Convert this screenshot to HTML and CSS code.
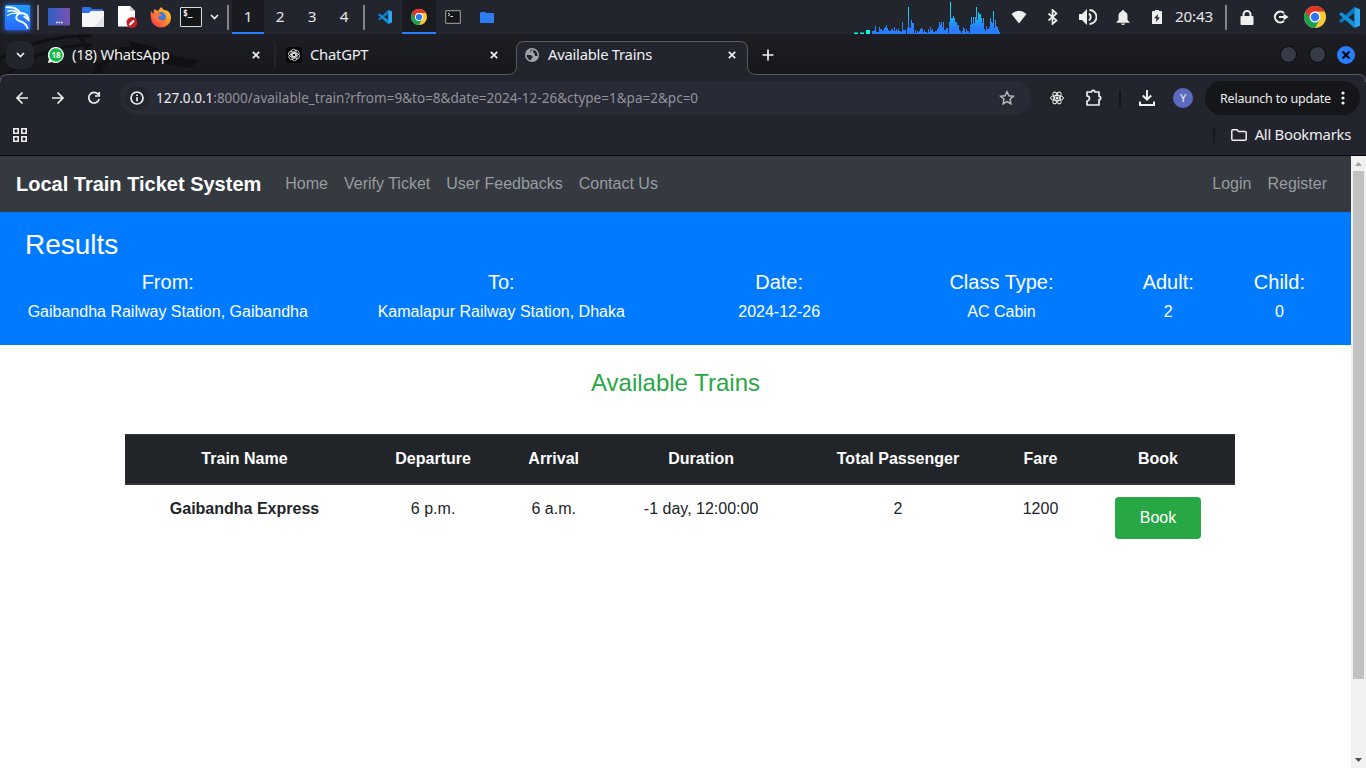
FILE: index.html
```html
<!DOCTYPE html>
<html lang="en">
<head>
<meta charset="utf-8">
<title>Available Trains</title>
<link rel="stylesheet" href="styles.css">
</head>
<body>
<svg class="defs" width="0" height="0">
  <defs>
    <linearGradient id="load" gradientUnits="userSpaceOnUse" x1="0" y1="0" x2="0" y2="34"><stop offset="0" stop-color="#00fff0"/><stop offset=".45" stop-color="#16c0ef"/><stop offset=".8" stop-color="#277fff"/><stop offset="1" stop-color="#277fff"/></linearGradient>
    <linearGradient id="desk" x1="0" y1="0" x2="1" y2="0"><stop offset="0" stop-color="#2f60c8"/><stop offset="1" stop-color="#7a51b0"/></linearGradient>
    <linearGradient id="kali" x1="0" y1="0" x2="0" y2="1"><stop offset="0" stop-color="#249bff"/><stop offset="1" stop-color="#2868ff"/></linearGradient>
    <linearGradient id="fox" x1="1" y1="0" x2="0" y2="1"><stop offset="0" stop-color="#ffe23c"/><stop offset=".45" stop-color="#ff9029"/><stop offset="1" stop-color="#f3225b"/></linearGradient>
    <symbol id="chrome" viewBox="0 0 48 48">
      <circle cx="24" cy="24" r="24" fill="#fcc934"/>
      <path d="M24 24 3.2 12A24 24 0 0 0 24 48l10.4-18z" fill="#1e9e4f"/>
      <path d="M24 12h20.8A24 24 0 0 0 3.2 12l10.4 18A12 12 0 0 1 24 12z" fill="#e1352c"/>
      <circle cx="24" cy="24" r="12" fill="#fff"/><circle cx="24" cy="24" r="9.3" fill="#2a78f0"/>
    </symbol>
    <symbol id="vscode" viewBox="0 0 24 24">
      <path d="M17.5 0 24 2.7v18.6L17.5 24z" fill="#29a9f2"/>
      <path d="M17.5 0 0 15.8l2.6 2.4L17.5 6.8z" fill="#0a78c2"/>
      <path d="M17.5 24 0 8.2l2.6-2.4 14.9 11.4z" fill="#1190dc"/>
    </symbol>
  </defs>
</svg>

<div class="panel">
  <span class="slot w34"><svg class="kali" width="25" height="25" viewBox="0 0 26 26"><rect width="26" height="26" rx="1" fill="url(#kali)"/><g fill="none" stroke="#fff" stroke-linecap="round"><path d="M1.500 2.500C8 1.500 13 4 16 8.500" stroke-width="2"/><path d="M3 6.500C7 5 11 6 14 8.500" stroke-width="1.400"/><path d="M2.500 11C6 8 10 8 14 9" stroke-width="1.200"/><path d="M14 9C20 7.500 24 10 24.500 15.500L20 12" stroke-width="2"/><path d="M13.500 9.500C9 15 14 16.500 17.500 17.500S22 20 23.500 24" stroke-width="2"/></g></svg></span>
  <span class="sep"></span>
  <span class="slot w34"><svg width="22" height="18"><rect width="22" height="17.500" rx="1" fill="url(#desk)"/><path d="M8 14.500h1.500m1 0H12m1 0h1.500" stroke="#fff" stroke-width="1.400"/></svg></span>
  <span class="slot w34"><svg width="22" height="20"><path d="M1 0h7l2 2h10q1 0 1 1v5H0V1z" fill="#2f72e4"/><path d="M0 6h7l2-2h13v15q0 1-1 1H1q-1 0-1-1z" fill="#f6f6f8"/><path d="m12 20 10-11v11z" fill="#e1e1e6"/></svg></span>
  <span class="slot w34"><svg width="20" height="22"><path d="M1 0h12l5 5v15.500H1z" fill="#fff"/><path d="M13 0v5h5z" fill="#ccc"/><circle cx="15" cy="16.500" r="5.500" fill="#c91d25"/><path d="m12.500 19 4.500-4.500" stroke="#fff" stroke-width="2.200"/></svg></span>
  <span class="slot w34"><svg width="22" height="22" viewBox="0 0 22 22"><path d="M1 5 3.500 8 4 3l4 2 3-4 3 3c5 0 7 4 7 8a10 9.500 0 0 1-20 0C.5 9 .5 7 1 5z" fill="url(#fox)"/><circle cx="11" cy="11" r="5" fill="#4379d9"/><path d="M4 8c3-2 6-1 8 1l-4 2c1 4 5 4 8 2-2 5-10 5-12-1z" fill="#ff7139"/></svg></span>
  <span class="slot w26"><span class="termicon">$_</span></span>
  <span class="slot w20"><svg width="9" height="6"><path d="m1 1 3.500 3.500L8 1" class="stroke2"/></svg></span>
  <span class="sep"></span>
  <span class="slot w32 active">1</span><span class="slot w32">2</span><span class="slot w32">3</span><span class="slot w32">4</span>
  <span class="sep"></span>
  <span class="slot w34"><svg width="14" height="14"><use href="#vscode"/></svg></span>
  <span class="slot w34 active"><svg width="16" height="16"><use href="#chrome"/></svg></span>
  <span class="slot w34"><svg width="16" height="14"><rect x=".6" y=".6" width="14.800" height="12.800" rx="1" fill="#16171b" stroke="#8c8c8c" stroke-width="1.200"/><path d="m3 3 2 1.500L3 6M5.500 6.500H8" stroke="#ddd" fill="none"/></svg></span>
  <span class="slot w34"><svg width="14" height="11"><path d="M0 1q0-1 1-1h4l1 1h7q1 0 1 1v8q0 1-1 1H1q-1 0-1-1z" fill="#2f7df4"/></svg></span>
  <span class="grow"></span>
  <svg class="graph" width="148" height="34" shape-rendering="crispEdges"><path d="M0 33.500h4m2 0h4" stroke="#12f5dc"/><path d="M0 32.500h4m2 0h4" stroke="#178986"/><path d="M12 30h4v4h-4z" fill="#00ffe0"/><path id="bars" fill="url(#load)"/></svg>
  <span class="slot w34"><svg width="16" height="14"><path d="M.5 4Q8-2.500 15.500 4L8 13.500z" class="light"/></svg></span>
  <span class="slot w34"><svg width="12" height="16"><path d="m1.500 4.500 8 7L5.500 15V1l4 3.500-8 7" class="stroke2"/></svg></span>
  <span class="slot w36"><svg width="18" height="16"><path d="M0 5h3l5-5v16l-5-5H0z" class="light"/><path d="M10 4.500q3.500 3.500 0 7M10.500 1a7 7 0 0 1 0 14" fill="none" stroke="#eee" stroke-width="1.800"/></svg></span>
  <span class="slot w34"><svg width="14" height="15"><path d="M7 0q1.200 0 1.200 1.300Q11.500 2.500 11.500 6v4L14 12.800H0L2.500 10V6q0-3.500 3.300-4.700Q5.800 0 7 0zM5 13.500h4Q8.500 15 7 15t-2-1.500z" class="light"/></svg></span>
  <span class="slot w34"><svg width="10" height="14"><path d="M3 0h4v1h2q1 0 1 1v12H0V2q0-1 1-1h2z" class="light"/><path d="M6 4 2 8.200h2.500L4 12l4-4.500H5.600z" fill="#23252e"/></svg></span>
  <span class="slot w40 clock">20:43</span>
  <span class="gap8"></span>
  <span class="sep"></span>
  <span class="slot w34"><svg width="14" height="15"><rect y="6" x=".5" width="13" height="9" rx="1" class="light"/><path d="M3.500 7V4.500a3.500 3.500 0 0 1 7 0V7" fill="none" stroke="#eee" stroke-width="2"/></svg></span>
  <span class="slot w34"><svg width="16" height="14"><path d="M11 3A5.400 5.400 0 1 0 11 11M6 7h6" fill="none" stroke="#eee" stroke-width="2.100"/><path d="m10.500 3.500 5 3.500-5 3.500z" class="light"/></svg></span>
  <span class="slot w34"><svg width="22" height="22"><use href="#chrome"/></svg></span>
  <span class="slot w34"><svg width="21" height="21"><use href="#vscode"/></svg></span>
</div>

<div class="browser">
  <div class="tabstrip">
    <svg class="wall" width="1366" height="50"><g fill="none" stroke="#101115"><path d="M-5 28Q35 1 92 2M4 43Q42 10 92 11" stroke-width="3"/><path d="m79 1 23 38" stroke-width="4"/><path d="M94 41q18-28 50-27" stroke-width="6"/></g><path d="m127 6 26 7 25 10 21 3-8 8-15-4 12 4-24-5-31-2-14-4 13-4-16-6 16 1z" fill="#0f1014"/>
      <path d="M0 48.500V48q0-7.500 8-7.500h500q8.500 0 8.500-9V15q0-7.500 8-7.500h215q8 0 8 7.500v16.500q0 9 9 9H1358q7.500 0 7.500 7.500" fill="#23252e" stroke="#5a5c64"/></svg>
    <button class="tabsearch"><svg width="9" height="6"><path d="m1 1 3.500 3.500L8 1" class="stroke2"/></svg></button>
    <div class="tab t1"><svg width="16" height="16"><path d="M8 0a8 8 0 1 1-4 15L0 16l1-4A8 8 0 0 1 8 0z" fill="#fff"/><circle cx="8" cy="8" r="6.700" fill="#12bd43"/><text x="8" y="11" text-anchor="middle" class="badge">18</text></svg><span class="tname">(18) WhatsApp</span><svg class="x" width="8" height="8"><path d="m.8.8 6.400 6.400m0-6.400L.8 7.200" class="stroke2"/></svg></div>
    <div class="tab t2"><svg width="16" height="16"><rect width="16" height="16" rx="3" fill="#08090b"/><g fill="none" stroke="#ddd" stroke-width=".8"><rect id="p" x="5" y="2.300" width="5" height="7.500" rx="2.400"/><use href="#p" transform="rotate(60 8 8)"/><use href="#p" transform="rotate(120 8 8)"/><use href="#p" transform="rotate(180 8 8)"/><use href="#p" transform="rotate(240 8 8)"/><use href="#p" transform="rotate(300 8 8)"/></g></svg><span class="tname">ChatGPT</span><svg class="x" width="8" height="8"><path d="m.8.8 6.400 6.400m0-6.400L.8 7.200" class="stroke2"/></svg></div>
    <div class="tab t3"><svg width="14" height="14"><circle cx="7" cy="7" r="7" fill="#a2a5ae"/><path d="M8 1.600H6.500L5 3v1.500L3 5.500 1.600 7H6l1.500 1.500v1.300L6 11v1.300C3.500 11.800 1.600 9.800 1.500 7M8.500 1.800 8 4.500l1.500 1L10 8h2.500c.3-3-1.500-5.500-4-6.200z" fill="#23252e"/></svg><span class="tname">Available Trains</span><svg class="x" width="8" height="8"><path d="m.8.8 6.400 6.400m0-6.400L.8 7.200" class="stroke2"/></svg></div>
    <svg class="plus" width="12" height="12"><path d="M6 .5v11M.5 6h11" class="stroke2"/></svg>
    <span class="grow"></span>
    <span class="winbtn"></span><span class="winbtn"></span>
    <span class="winbtn close"><svg width="10" height="10"><path d="m1.500 1.500 7 7m0-7-7 7" stroke="#0a0c12" stroke-width="2.400"/></svg></span>
  </div>

  <div class="toolbar">
    <svg class="back" width="14" height="14"><path d="M13 7H2m5.500-5.500L2 7l5.500 5.500" class="stroke2"/></svg>
    <svg class="fwd" width="14" height="14"><path d="M1 7h11M6.500 1.500 12 7l-5.500 5.500" class="stroke2"/></svg>
    <svg class="reload" width="14" height="14"><path d="M11.300 3.500A5.300 5.300 0 1 0 12.200 8M12.200 1v4H8" class="stroke2"/></svg>
    <div class="urlbar">
      <span class="info"><svg width="14" height="14"><circle cx="7" cy="7" r="6" class="stroke2"/><path d="M7 6.200v4M7 3.500v1.600" class="stroke2"/></svg></span>
      <span class="url"><b>127.0.0.1</b>:8000/available_train?rfrom=9&amp;to=8&amp;date=2024-12-26&amp;ctype=1&amp;pa=2&amp;pc=0</span>
      <svg width="16" height="16"><path d="m8 1.800 1.900 4 4.400.5-3.300 3 .9 4.400L8 11.500l-3.900 2.200.9-4.400-3.300-3 4.400-.5z" fill="none" stroke="#b8b9bd" stroke-width="1.500"/></svg>
    </div>
    <svg class="react" width="16" height="16"><rect width="16" height="16" fill="#202229"/><g fill="none" stroke="#eee" stroke-width="1"><ellipse cx="8" cy="8" rx="6.500" ry="2.600"/><ellipse cx="8" cy="8" rx="6.500" ry="2.600" transform="rotate(60 8 8)"/><ellipse cx="8" cy="8" rx="6.500" ry="2.600" transform="rotate(120 8 8)"/></g><circle cx="8" cy="8" r="1.500" fill="#eee"/></svg>
    <svg class="puzzle" width="18" height="18"><path d="M2 3h4.500a1.700 1.700 0 0 1 3.400 0H14v4.300a1.700 1.700 0 0 1 0 3.400V16H2v-4a2.500 2.500 0 0 0 0-5z" fill="none" stroke="#eee" stroke-width="1.700" stroke-linejoin="round"/></svg>
    <span class="vline"></span>
    <svg class="down" width="16" height="16"><path d="M8 0v9M3.800 5.500 8 9.700l4.200-4.200M1 11.500V15h14v-3.500" fill="none" stroke="#eee" stroke-width="2"/></svg>
    <span class="avatar">Y</span>
    <span class="relaunch"><span class="rtext">Relaunch to update</span><svg width="4" height="14"><circle cx="2" cy="2" r="1.600" class="light"/><circle cx="2" cy="7" r="1.600" class="light"/><circle cx="2" cy="12" r="1.600" class="light"/></svg></span>
  </div>
  <div class="bookmarks">
    <svg width="14" height="14"><path d="M.8.8h4.400v4.400H.8zM8.800.8h4.400v4.400H8.800zM.8 8.800h4.400v4.400H.8zM8.800 8.800h4.400v4.400H8.800z" fill="none" stroke="#eee" stroke-width="1.600"/></svg>
    <span class="grow"></span><span class="vline"></span>
    <svg class="folder" width="16" height="12"><path d="M.8 10V2q0-1.200 1.200-1.200h4L7.500 2.500H14q1.200 0 1.200 1v6.700q0 1-1 1H2q-1.200 0-1.200-1.200z" fill="none" stroke="#eee" stroke-width="1.500"/></svg>
    <span class="allbm">All Bookmarks</span>
  </div>
</div>

<div class="viewport">
  <main class="page">
    <nav class="navbar"><a class="brand">Local Train Ticket System</a><a>Home</a><a>Verify Ticket</a><a>User Feedbacks</a><a>Contact Us</a><span class="grow"></span><a>Login</a><a>Register</a></nav>
    <section class="results">
      <h3>Results</h3>
      <div class="row">
        <div><h5>From:</h5><p>Gaibandha Railway Station, Gaibandha</p></div>
        <div><h5>To:</h5><p>Kamalapur Railway Station, Dhaka</p></div>
        <div><h5>Date:</h5><p>2024-12-26</p></div>
        <div><h5>Class Type:</h5><p>AC Cabin</p></div>
        <div><h5>Adult:</h5><p>2</p></div>
        <div><h5>Child:</h5><p>0</p></div>
      </div>
    </section>
    <h4 class="title">Available Trains</h4>
    <table class="trains">
      <colgroup><col class="c1"><col class="c2"><col class="c3"><col class="c4"><col class="c5"><col class="c6"><col class="c7"></colgroup>
      <thead><tr><th>Train Name</th><th>Departure</th><th>Arrival</th><th>Duration</th><th>Total Passenger</th><th>Fare</th><th>Book</th></tr></thead>
      <tbody><tr><th>Gaibandha Express</th><td>6 p.m.</td><td>6 a.m.</td><td>-1 day, 12:00:00</td><td>2</td><td>1200</td><td><a class="btn">Book</a></td></tr></tbody>
    </table>
  </main>
  <div class="scrollbar">
    <svg width="15" height="15"><path d="M4 10h7L7.500 6z" fill="#a3a3a3"/></svg>
    <span class="thumb"></span><span class="grow"></span>
    <svg width="15" height="15"><path d="M4 5h7L7.500 9z" fill="#505050"/></svg>
  </div>
</div>
<script src="graph.js"></script>
</body>
</html>
```
FILE: styles.css
```css
* { box-sizing: border-box; }
body { margin: 0; width: 1366px; height: 768px; overflow: hidden; display: flex; flex-direction: column; background: #fff; font-family: "Noto Sans", sans-serif; color: #eee; }
svg { display: block; flex: none; }
.defs { position: absolute; }
.light { fill: #eee; }
.stroke2 { fill: none; stroke: #eee; stroke-width: 1.7; }
.grow { flex: 1; }

.panel { height: 34px; flex: none; display: flex; background: #23252e; font-size: 15.3px; line-height: 20px; color: #e4e4e6; }
.slot { height: 34px; flex: none; display: flex; align-items: center; justify-content: center; }
.w20 { width: 20px; } .w26 { width: 26px; } .w32 { width: 32px; padding-bottom: 2px; } .w34 { width: 34px; } .w36 { width: 36px; } .w40 { width: 40px; }
.gap8 { width: 8px; }
.active { background: #191b20; box-shadow: inset 0 -2px #277fff; }
.sep { width: 2px; height: 25px; margin: 5px 3px 0; background: #858589; }
.kali { box-shadow: 0 0 5px #2777ff; }
.termicon { width: 22px; height: 20px; border: 1px solid #ddd; border-radius: 1px; background: #141518; color: #fff; font: bold 8px/12px "DejaVu Sans Mono", monospace; padding-left: 2px; }
.clock { padding-bottom: 2px; letter-spacing: -.2px; }

.browser { height: 122px; flex: none; background: #23252e; border-bottom: 1px solid #08090c; }
.tabstrip { position: relative; height: 41px; display: flex; align-items: center; background: linear-gradient(#1d1e23, #17181c); font-size: 14.8px; letter-spacing: -.25px; }
.tabstrip > * { position: relative; }
.tabstrip > .wall { position: absolute; left: 0; top: 0; height: 50px; }
.tabsearch { width: 28px; height: 28px; margin-left: 6px; border: 0; border-radius: 9px; background: #23252e; display: flex; align-items: center; justify-content: center; padding: 0; }
.tab { height: 24px; display: flex; align-items: center; flex: none; }
.t1 { width: 212px; margin-left: 14px; }
.t2 { width: 224px; margin-left: 14px; padding-left: 10px; border-left: 2px solid #23252e; }
.t3 { width: 211px; margin-left: 27px; }
.tname { flex: 1; margin-left: 8px; padding-bottom: 2px; white-space: nowrap; }
.t3 .tname { margin-left: 9px; }
.badge { font: bold 8px "Noto Sans", sans-serif; fill: #fff; letter-spacing: 0; }
.plus { margin-left: 26px; }
.winbtn { width: 17px; height: 17px; margin-right: 12px; border-radius: 50%; border: 1px solid #08090c; background: #363b47; display: flex; align-items: center; justify-content: center; flex: none; }
.winbtn.close { width: 18px; height: 18px; margin-right: 11px; margin-left: -1px; border: 0; background: #277fff; }

.toolbar { position: relative; height: 46px; display: flex; align-items: center; }
.back { margin-left: 15px; } .fwd { margin-left: 22px; } .reload { margin-left: 22px; }
.urlbar { width: 911px; height: 34px; margin-left: 19px; border-radius: 17px; background: #282a35; display: flex; align-items: center; padding: 0 16px 0 5px; }
.info { width: 24px; height: 24px; border-radius: 50%; background: #23252e; display: flex; align-items: center; justify-content: center; }
.url { flex: 1; margin-left: 7px; font-size: 13.52px; color: #92939a; white-space: nowrap; }
.url b { color: #eee; font-weight: 400; }
.react { margin-left: 18px; } .puzzle { margin-left: 20px; }
.vline { width: 2px; height: 16px; background: #15161b; }
.toolbar .vline { margin-left: 16px; }
.down { margin-left: 18px; }
.avatar { width: 20px; height: 20px; margin-left: 18px; border-radius: 50%; background: #5c6bc0; font-size: 11px; line-height: 20px; text-align: center; }
.relaunch { width: 155px; height: 34px; margin-left: 12px; border-radius: 17px; background: #15161a; display: flex; align-items: center; padding: 0 15px; font-size: 12.5px; letter-spacing: -.2px; white-space: nowrap; }
.rtext { flex: 1; }
.bookmarks { height: 34px; display: flex; align-items: center; padding: 0 15px 6px 13px; font-size: 14.8px; letter-spacing: -.25px; }
.allbm { padding-bottom: 2px; }
.folder { margin: 0 8px 0 16px; }

.viewport { flex: 1; display: flex; font-family: "Liberation Sans", Arial, sans-serif; }
.page { width: 1351px; background: #fff; color: #212529; font-size: 16px; line-height: 24px; }
.navbar { height: 56px; display: flex; align-items: center; background: #343a40; padding: 0 16px; color: #999c9f; }
.navbar a { padding: 0 8px; }
.navbar .brand { padding: 0; margin-right: 16px; color: #fff; font-size: 20px; font-weight: 700; }
.results { height: 133px; background: #007bff; color: #fff; padding-top: 16px; }
h3, h4, h5, p { margin: 0; font-weight: 400; }
h3 { font-size: 28px; line-height: 34px; padding-left: 25px; margin-bottom: 8px; }
.row { display: grid; grid-template-columns: 3fr 3fr 2fr 2fr 1fr 1fr; width: 1334px; margin-left: 1px; text-align: center; }
h5 { font-size: 20px; line-height: 24px; margin-bottom: 6px; }
.title { margin-top: 23px; font-size: 24px; line-height: 29px; color: #28a745; text-align: center; }
.trains { width: 1110px; margin: 37px 0 0 125px; table-layout: fixed; border-collapse: separate; border-spacing: 0; text-align: center; }
.trains th, .trains td { padding: 12px 0; vertical-align: top; }
.trains thead th { height: 51px; background: #212529; color: #fff; border-top: 1px solid #32383e; border-bottom: 2px solid #32383e; }
.trains tr > :last-child { padding-right: 1px; }
.c1 { width: 239px; } .c2 { width: 138.2px; } .c3 { width: 103px; } .c4 { width: 191.8px; } .c5 { width: 202px; } .c6 { width: 83px; } .c7 { width: 153px; }
.btn { display: block; width: 86px; height: 42px; margin-left: 33px; border-radius: 4px; background: #28a745; color: #fff; line-height: 42px; }
.scrollbar { width: 15px; background: #f1f1f1; display: flex; flex-direction: column; }
.thumb { height: 508px; margin: 0 2px; background: #c1c1c1; }
```
FILE: graph.js
```js
// CPU load history, one pixel-wide bar per sample
const load = [3,3,4,8,2,2,2,7,5,5,3,4,6,7,9,6,4,3,3,5,5,3,7,3,5,3,5,3,3,2,12,4,4,4,0,6,27,7,6,14,11,11,1,4,1,3,2,3,5,6,5,2,4,2,2,1,5,2,7,4,5,2,2,3,3,5,7,12,9,12,7,12,4,4,6,6,1,12,32,16,16,18,16,12,12,9,9,4,3,1,3,7,5,2,5,3,3,1,9,17,10,17,11,17,27,14,22,20,20,16,11,16,5,3,8,5,5,7,16,12,11,23,6,14,8,7,4,2];
document.getElementById("bars").setAttribute("d", load.map((v, i) => `M${18 + i} 34v${-v}h1v${v}z`).join(""));
```
